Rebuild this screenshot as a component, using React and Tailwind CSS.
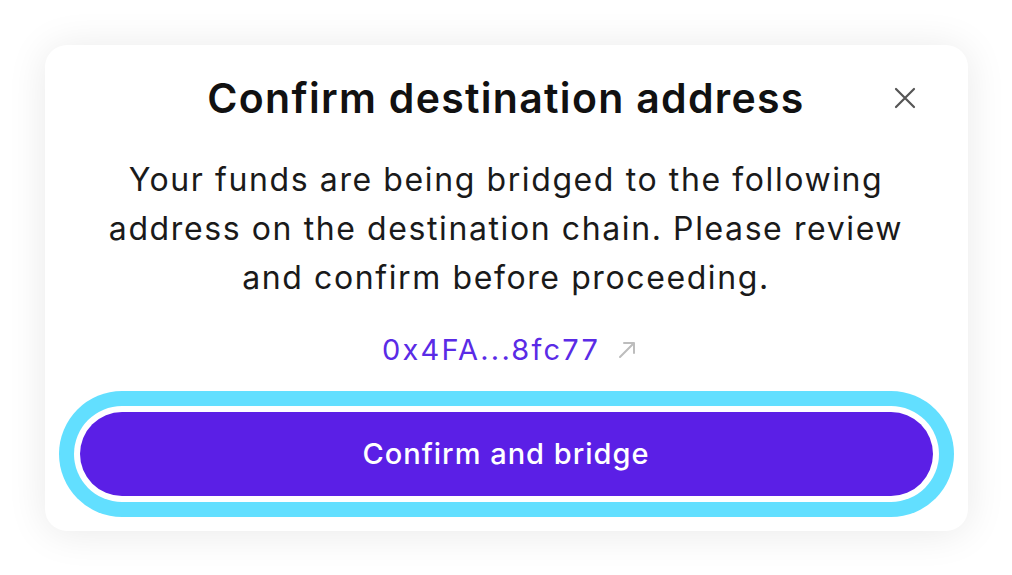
import React from "react";

export default function App() {
  return (
    <div className="w-[1012px] h-[575px] flex items-center justify-center bg-white" style={{ fontFamily: "Inter, 'Noto Sans', sans-serif" }}>
      <div className="w-[923px] h-[486px] rounded-[22px] bg-white shadow-[0_2px_40px_rgba(0,0,0,0.09)] px-[14px] pb-[14px] pt-[28px] flex flex-col">
        <div className="grid grid-cols-[1fr_auto_1fr] items-center">
          <div />
          <h1 className="text-[41px] leading-[50px] font-semibold text-[#111] tracking-[1.3px]">Confirm destination address</h1>
          <div className="flex justify-end pr-[38px]">
            <svg width="22" height="22" viewBox="0 0 22 22" fill="none" stroke="#555" strokeWidth="2.2" strokeLinecap="round">
              <path d="M2 2L20 20M20 2L2 20" />
            </svg>
          </div>
        </div>
        <p className="mt-[32px] text-center text-[32px] leading-[49px] text-[#1a1a1a] tracking-[1.6px]">
          Your funds are being bridged to the following
          <br />
          address on the destination chain. Please review
          <br />
          and confirm before proceeding.
        </p>
        <div className="mt-[28px] flex items-center justify-center gap-[18px] pl-[6px]">
          <span className="text-[29px] leading-[40px] text-[#5a2be6] tracking-[2.2px]">0x4FA...8fc77</span>
          <svg width="18" height="18" viewBox="0 0 18 18" fill="none" stroke="#bdbdbd" strokeWidth="2" strokeLinecap="round" strokeLinejoin="round">
            <path d="M2 16L16 2M6 2H16V12" />
          </svg>
        </div>
        <div className="mt-auto rounded-full bg-[#62dfff] p-[15px]">
          <div className="rounded-full bg-white p-[6px]">
            <button className="w-full h-[84px] rounded-full bg-[#5b1fe6] text-white text-[29px] font-medium tracking-[1px]">
              Confirm and bridge
            </button>
          </div>
        </div>
      </div>
    </div>
  );
}
